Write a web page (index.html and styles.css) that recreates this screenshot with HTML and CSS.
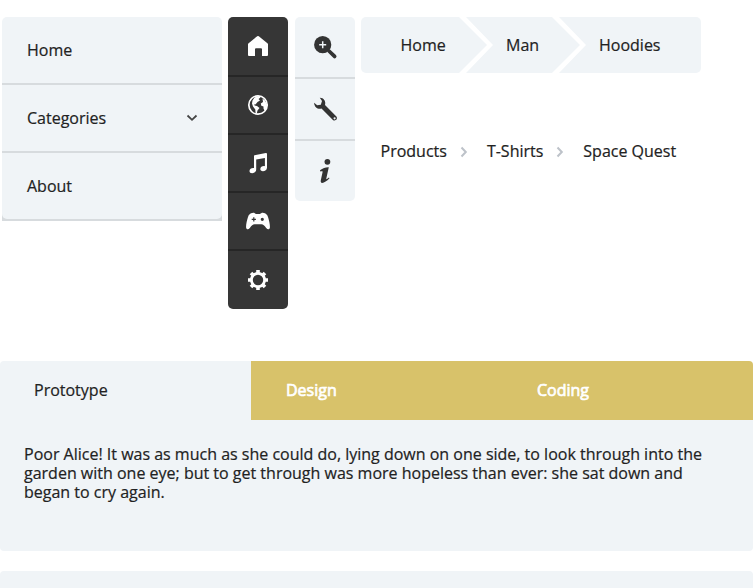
FILE: index.html
```html
<!DOCTYPE html>
<html lang="en">
<head>
<meta charset="utf-8">
<title>Navigation</title>
<link rel="stylesheet" href="styles.css">
</head>
<body>
<div class="top">
  <nav class="menu">
    <a class="menu-item">Home</a>
    <a class="menu-item">Categories
      <svg class="chevron" width="12" height="8" viewBox="0 0 12 8"><path d="M1.500 1.500 6 5.800l4.500-4.300" fill="none" stroke="#444" stroke-width="1.800"/></svg>
    </a>
    <a class="menu-item">About</a>
  </nav>
  <nav class="rail dark">
    <a><svg width="24" height="24" viewBox="0 0 24 24"><path fill="#fff" d="M2 10.500Q2 9.800 2.600 9.300L11.200 2.200Q12 1.600 12.800 2.200L21.400 9.300Q22 9.800 22 10.500V21Q22 22 21 22H16V15.200Q16 14.200 15 14.200H10Q9 14.200 9 15.200V22H3Q2 22 2 21Z"/></svg></a>
    <a><svg width="24" height="24" viewBox="0 0 24 24"><circle cx="12" cy="12" r="9.200" fill="none" stroke="#fff" stroke-width="1.700"/><path fill="#fff" d="M8.500 4.500 12.500 3 14.500 4.500 12.500 6 14 7.500 11.500 9 9.500 11.500 8.500 11 8.500 12.500 11 13 13.500 15 11.500 17.500 10.800 20.500 9.500 19.500 9.300 16.500 7 13.500 6 10.500 6.500 7.500ZM16.500 5.500 19 7.500 21 11.500 20.500 15 18.500 17.500 17.500 15.500 17.500 13.500 15.300 12.800 14.800 10.500 17 9Z"/></svg></a>
    <a><svg width="24" height="24" viewBox="0 0 24 24"><path fill="#fff" d="M8.500 4.300 19.800 2Q21 1.800 21 3V16.500C21 19 19 20.200 16.900 20.200 15.300 20.200 14.300 19.300 14.300 18 14.300 15.800 16.600 14.800 18.900 15.200V7L10.200 8.600V18.500C10.200 21 8 22.200 6.100 22.200 4.500 22.200 3.500 21.200 3.500 19.900 3.500 17.800 5.800 16.700 8 17.100V5Q8 4.400 8.500 4.300Z"/></svg></a>
    <a><svg width="24" height="24" viewBox="0 0 24 24"><path fill="#fff" fill-rule="evenodd" d="M6.500 4C8 3.500 9 4.500 10 4.900H14C15 4.500 16 3.500 17.500 4 19.800 4.200 21.200 5.500 22 8 23.200 11.500 24.300 17 23.800 19 23.300 20.700 21.500 20.500 20.200 19 18.300 16.500 17.200 15.300 15.500 15.300H8.500C6.800 15.300 5.700 16.500 3.800 19 2.500 20.500.7 20.700.2 19-.3 17 .8 11.500 2 8 2.800 5.500 4.200 4.200 6.500 4ZM7.200 8.200V9.700H5.700V10.900H7.200V12.400H8.400V10.900H9.900V9.700H8.400V8.200ZM16.300 8.700A1.600 1.600 0 1 0 16.300 11.900 1.600 1.600 0 1 0 16.300 8.700Z"/></svg></a>
    <a><svg width="24" height="24" viewBox="0 0 24 24"><circle cx="12" cy="12" r="6.600" fill="none" stroke="#fff" stroke-width="2.800"/><g stroke="#fff" stroke-width="3.600"><path d="M12 2V5M12 19v3M2 12h3M19 12h3M5 5l2 2M17 17l2 2M5 19l2-2M17 7l2-2"/></g></svg></a>
  </nav>
  <nav class="rail light">
    <a><svg width="24" height="24" viewBox="0 0 24 24"><circle cx="9.700" cy="9.700" r="8.600" fill="#333"/><path d="m16 16 5.600 5.400" stroke="#333" stroke-width="3.800" stroke-linecap="round"/><path d="M9.700 6.200v7M6.200 9.700h7" stroke="#f0f4f7" stroke-width="1.500"/></svg></a>
    <a><svg width="24" height="24" viewBox="0 0 24 24"><path fill="#333" fill-rule="evenodd" d="M6.800.8C10.500.7 13.200 4.200 12 8L23.400 19.600C25.200 22 22.300 24.700 19.900 23L8.500 11.500C5.200 12.700 1.300 10.500 1.100 5.700L4.200 8.300 7.800 7.700 9 4.100ZM21.600 20.200A1.100 1.100 0 1 0 21.600 22.400 1.100 1.100 0 1 0 21.600 20.200Z"/></svg></a>
    <a><svg width="24" height="24" viewBox="0 0 24 24"><circle cx="14.400" cy="2.800" r="2.900" fill="#333"/><path fill="#333" d="M7 11.300C10 9 13 8.100 15.800 8.300L13.300 19.500C13.100 20.700 13.800 20.200 15.900 18.500L16.500 19.300C13.800 22 11.300 24 9.200 24 7.700 24 7.500 22.700 7.900 20.800L9.500 13.500C9.800 12.200 9.600 11.800 7.300 12.500Z"/></svg></a>
  </nav>
  <div class="crumbs">
    <nav class="arrows">
      <a class="first">Home</a><a class="mid">Man</a><a class="last">Hoodies</a>
    </nav>
    <nav class="trail">
      <a>Products</a>
      <svg class="sep" width="8" height="12" viewBox="0 0 8 12"><path d="m1.500 1.500 4.300 4.500-4.300 4.500" fill="none" stroke="#bdc2c9" stroke-width="2"/></svg>
      <a>T-Shirts</a>
      <svg class="sep" width="8" height="12" viewBox="0 0 8 12"><path d="m1.500 1.500 4.300 4.500-4.300 4.500" fill="none" stroke="#bdc2c9" stroke-width="2"/></svg>
      <a>Space Quest</a>
    </nav>
  </div>
</div>
<section class="tabs">
  <div class="tab-row">
    <a class="tab active">Prototype</a>
    <a class="tab">Design</a>
    <a class="tab">Coding</a>
  </div>
  <p class="panel">Poor Alice! It was as much as she could do, lying down on one side, to look through into the garden with one eye; but to get through was more hopeless than ever: she sat down and began to cry again.</p>
</section>
<section class="next"></section>
</body>
</html>
```
FILE: styles.css
```css
* { box-sizing: border-box; }
body {
  margin: 0;
  height: 588px;
  overflow: hidden;
  background: #fff;
  color: #222;
  font: 16px/19px "Open Sans", sans-serif;
  -webkit-text-stroke: 0.2px;
}
svg { display: block; overflow: visible; }
.top {
  display: flex;
  align-items: flex-start;
  height: 361px;
  padding: 17px 0 0 2px;
}
.menu { width: 220px; margin-right: 6px; background: linear-gradient(#fff 50%, #d7dbde 50%); border-radius: 5px 5px 0 0; }
.menu-item {
  display: flex;
  align-items: center;
  justify-content: space-between;
  height: 66px;
  margin-bottom: 2px;
  padding: 0 24px 0 25px;
  background: #f0f4f7;
  box-shadow: 0 2px #d7dbde;
}
.menu-item:first-child { border-radius: 5px 5px 0 0; }
.menu-item:last-child { border-radius: 0 0 5px 5px; }
.rail {
  width: 60px;
  border-radius: 5px;
  overflow: hidden;
}
.rail a {
  display: flex;
  align-items: center;
  justify-content: center;
}
.dark { background: #363636; margin-right: 7px; }
.dark a { height: 58px; border-bottom: 2px solid #262626; }
.dark a:first-child { height: 60px; }
.dark a:last-child { border-bottom: 0; }
.light { background: #f0f4f7; margin-right: 6px; }
.light a { height: 62px; border-bottom: 2px solid #d7dbde; }
.light a:last-child { height: 60px; border-bottom: 0; }
.arrows { display: flex; height: 56px; width: 340px; }
.arrows a {
  padding: 19px 0 0 40px;
  background: #f0f4f7;
}
.arrows .first {
  width: 126px;
  padding-left: 39.5px;
  border-radius: 5px 0 0 5px;
  clip-path: polygon(0 0, 98px 0, 100% 50%, 98px 100%, 0 100%);
}
.arrows .mid {
  width: 114px;
  margin-left: -21px;
  clip-path: polygon(0 0, 86px 0, 100% 50%, 86px 100%, 0 100%, 27px 50%);
}
.arrows .last {
  width: 142px;
  margin-left: -21px;
  border-radius: 0 5px 5px 0;
  clip-path: polygon(0 0, 100% 0, 100% 100%, 0 100%, 27px 50%);
}
.trail { display: flex; align-items: center; padding: 69px 0 0 19.5px; }
.sep { margin: 0 19px 0 13px; }
.tab-row { display: flex; height: 59px; }
.tab {
  flex: 1;
  padding: 20px 0 0 35px;
  background: #d8c26a;
  color: #fff;
  -webkit-text-stroke: 0.7px;
}
.tab:last-child { border-radius: 0 4px 0 0; }
.tab.active {
  flex: 0 0 251px;
  padding-left: 34px;
  background: #f0f4f7;
  color: #222;
  -webkit-text-stroke: 0.2px;
  border-radius: 4px 0 0 0;
}
.panel {
  height: 131px;
  margin: 0 0 20px;
  padding: 25px 24px;
  background: #f0f4f7;
  border-radius: 0 0 4px 4px;
}
.next { height: 17px; background: #f0f4f7; border-radius: 4px 4px 0 0; }
```
